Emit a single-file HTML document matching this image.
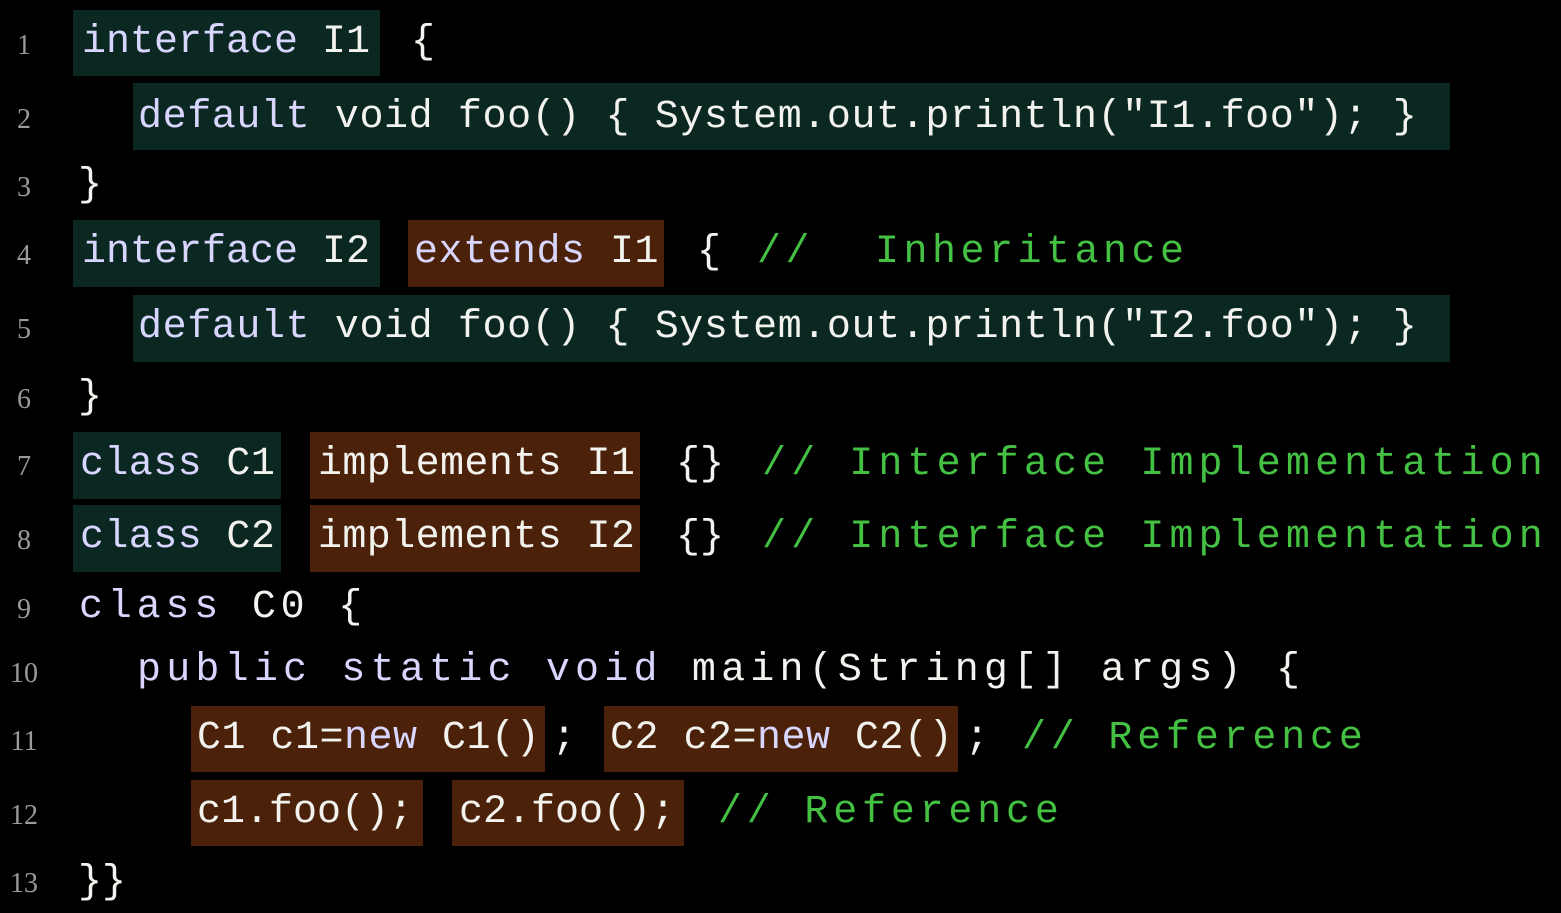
<!DOCTYPE html>
<html><head><style>
body{margin:0;width:1561px;height:913px;background:#000;overflow:hidden;position:relative;font-family:"Liberation Mono",monospace;}
.b{position:absolute;}
.t{background:#0b2722;}
.r{background:#4b2209;}
.s{position:absolute;font-size:40px;line-height:54px;white-space:pre;color:#f2f2ee;margin-top:3px;}
.k{color:#d8d6ff;}
.g{color:#44c043;}
.n{position:absolute;left:2px;width:44px;text-align:center;font-family:"Liberation Serif",serif;font-size:28px;color:#9a9a9a;line-height:40px;margin-top:2px;}
</style></head><body>
<div class="b t" style="left:73px;top:10px;width:307px;height:66px"></div>
<div class="b t" style="left:133px;top:83px;width:1317px;height:67px"></div>
<div class="b t" style="left:73px;top:220px;width:307px;height:67px"></div>
<div class="b r" style="left:408px;top:220px;width:256px;height:67px"></div>
<div class="b t" style="left:133px;top:295px;width:1317px;height:67px"></div>
<div class="b t" style="left:73px;top:432px;width:208px;height:67px"></div>
<div class="b r" style="left:310px;top:432px;width:330px;height:67px"></div>
<div class="b t" style="left:73px;top:505px;width:208px;height:67px"></div>
<div class="b r" style="left:310px;top:505px;width:330px;height:67px"></div>
<div class="b r" style="left:191px;top:706px;width:354px;height:66px"></div>
<div class="b r" style="left:604px;top:706px;width:354px;height:66px"></div>
<div class="b r" style="left:191px;top:780px;width:232px;height:66px"></div>
<div class="b r" style="left:452px;top:780px;width:232px;height:66px"></div>

<div class="n" style="top:24px">1</div>
<div class="n" style="top:98px">2</div>
<div class="n" style="top:166px">3</div>
<div class="n" style="top:234px">4</div>
<div class="n" style="top:308px">5</div>
<div class="n" style="top:378px">6</div>
<div class="n" style="top:445px">7</div>
<div class="n" style="top:519px">8</div>
<div class="n" style="top:588px">9</div>
<div class="n" style="top:652px">10</div>
<div class="n" style="top:720px">11</div>
<div class="n" style="top:794px">12</div>
<div class="n" style="top:862px">13</div>

<div class="s" style="left:82px;top:13px"><span class="k">interface</span> I1</div>
<div class="s" style="left:411px;top:13px">{</div>
<div class="s" style="left:138px;top:88px;letter-spacing:0.6px"><span class="k">default</span> void foo() { System.out.println("I1.foo"); }</div>
<div class="s" style="left:78px;top:156px">}</div>
<div class="s" style="left:82px;top:223px"><span class="k">interface</span> I2</div>
<div class="s" style="left:414px;top:223px;letter-spacing:0.5px"><span class="k">extends</span> I1</div>
<div class="s" style="left:697px;top:223px">{</div>
<div class="s g" style="left:757px;top:223px;letter-spacing:4.5px">//</div>
<div class="s g" style="left:875px;top:223px;letter-spacing:4.5px">Inheritance</div>
<div class="s" style="left:138px;top:298px;letter-spacing:0.6px"><span class="k">default</span> void foo() { System.out.println("I2.foo"); }</div>
<div class="s" style="left:78px;top:368px">}</div>
<div class="s" style="left:80px;top:435px;letter-spacing:0.4px"><span class="k">class</span> C1</div>
<div class="s" style="left:318px;top:435px;letter-spacing:0.4px">implements I1</div>
<div class="s" style="left:676px;top:435px">{}</div>
<div class="s g" style="left:762px;top:435px;letter-spacing:5.1px">// Interface Implementation</div>
<div class="s" style="left:80px;top:508px;letter-spacing:0.4px"><span class="k">class</span> C2</div>
<div class="s" style="left:318px;top:508px;letter-spacing:0.4px">implements I2</div>
<div class="s" style="left:676px;top:508px">{}</div>
<div class="s g" style="left:762px;top:508px;letter-spacing:5.1px">// Interface Implementation</div>
<div class="s" style="left:79px;top:578px;letter-spacing:4.8px"><span class="k">class</span> C0 {</div>
<div class="s" style="left:137px;top:641px;letter-spacing:5.2px"><span class="k">public static void</span> main(String[] args) {</div>
<div class="s" style="left:197px;top:709px;letter-spacing:0.5px">C1 c1=<span class="k">new</span> C1()</div>
<div class="s" style="left:552px;top:709px">;</div>
<div class="s" style="left:610px;top:709px;letter-spacing:0.5px">C2 c2=<span class="k">new</span> C2()</div>
<div class="s" style="left:965px;top:709px">;</div>
<div class="s g" style="left:1022px;top:709px;letter-spacing:4.8px">// Reference</div>
<div class="s" style="left:197px;top:783px">c1.foo();</div>
<div class="s" style="left:459px;top:783px">c2.foo();</div>
<div class="s g" style="left:718px;top:783px;letter-spacing:4.8px">// Reference</div>
<div class="s" style="left:78px;top:853px">}}</div>
</body></html>
